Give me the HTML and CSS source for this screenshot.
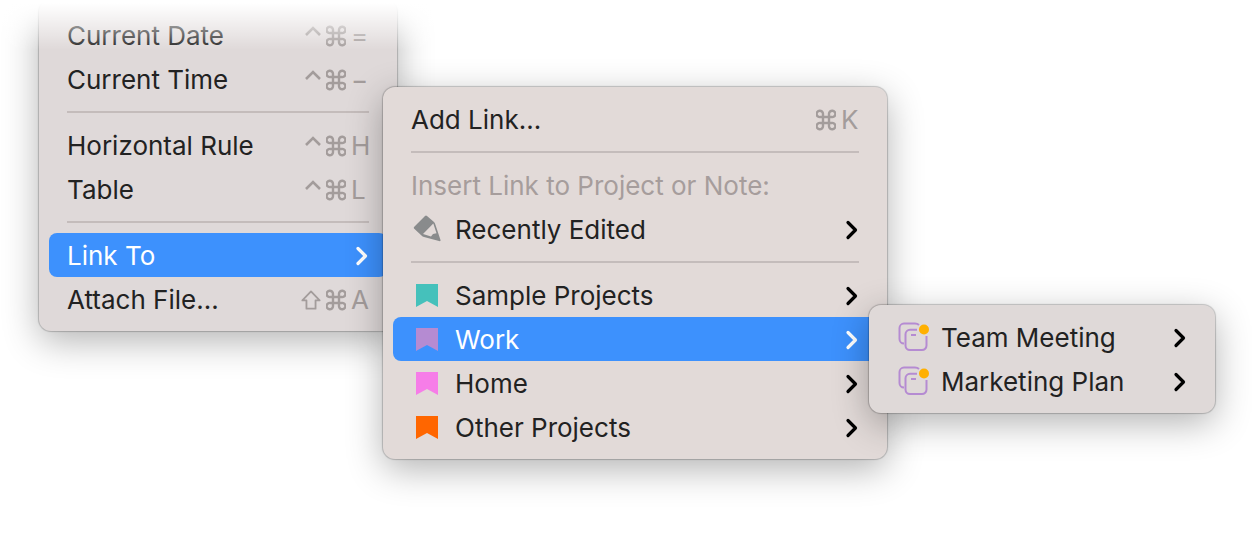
FILE: index.html
```html
<!DOCTYPE html>
<html lang="en">
<head>
    <meta charset="UTF-8">
    <meta name="viewport" content="width=device-width, initial-scale=1.0">
    <title>Insert Menu</title>
    <link rel="stylesheet" href="styles.css">
</head>
<body>
    <!-- Shared icons -->
    <svg class="icon-defs" aria-hidden="true">
        <symbol id="control" viewBox="0 0 16 22">
            <path d="M1 10 L8 3 L15 10" fill="none" stroke="currentColor" stroke-width="2.6"/>
        </symbol>
        <symbol id="command" viewBox="0 0 20 22">
            <path d="M7 8 H4.5 A3.2 3.2 0 1 1 7 4.8 V17.2 A3.2 3.2 0 1 1 4.5 14 H15.5 A3.2 3.2 0 1 1 13 17.2 V4.8 A3.2 3.2 0 1 1 15.5 8 Z" fill="none" stroke="currentColor" stroke-width="2.4"/>
        </symbol>
        <symbol id="shift" viewBox="0 0 22 22">
            <path d="M11 1.6 L20.500 11.500 H16 V20.500 H6 V11.500 H1.500 Z" fill="none" stroke="currentColor" stroke-width="2" stroke-linejoin="round"/>
        </symbol>
        <symbol id="chevron" viewBox="0 0 14 20">
            <path d="M3 2.5 L10.500 10 L3 17.5" fill="none" stroke="currentColor" stroke-width="3.2" stroke-linecap="round" stroke-linejoin="round"/>
        </symbol>
        <symbol id="pencil" viewBox="0 0 32 32">
            <path d="M3 14 L14 3 Q15 2 16 3 L23 9 Q24 10 24.500 12 L29.500 27 Q30 28.500 28 28 L13 24 Q11.500 23.500 10.500 22.500 L3 15.500 Q2.500 14.800 3 14 Z M22.300 10.500 L12 21 L20 23.500 L22 21 L25.500 20.300 Z" fill="currentColor" fill-rule="evenodd"/>
        </symbol>
        <symbol id="bookmark" viewBox="0 0 32 32">
            <path d="M5 5 H27 V28 L16 22 L5 28 Z" fill="currentColor"/>
        </symbol>
        <symbol id="notes" viewBox="0 0 32 32">
            <path d="M22 4 Q20.500 2.600 18 2.600 H7 A4.500 4.500 0 0 0 2.500 7 V18 A4.500 4.500 0 0 0 7 22.500" fill="none" stroke="currentColor" stroke-width="2"/>
            <path d="M20 8.800 H13 A4.500 4.500 0 0 0 8.500 13.300 V24.500 A4.500 4.500 0 0 0 13 29 H25 A4.500 4.500 0 0 0 29.500 24.500 V15" fill="none" stroke="currentColor" stroke-width="2"/>
            <path d="M14 14 H19" stroke="currentColor" stroke-width="2"/>
            <circle cx="27" cy="8.500" r="5" fill="#ffb000"/>
        </symbol>
    </svg>

    <nav class="menu-area" aria-label="Insert">
        <ul class="menu menu-insert">
            <li>
                <button class="item">Current Date
                    <span class="shortcut"><svg class="key-small"><use href="#control"/></svg><svg class="key"><use href="#command"/></svg><kbd>=</kbd></span>
                </button>
            </li>
            <li>
                <button class="item">Current Time
                    <span class="shortcut"><svg class="key-small"><use href="#control"/></svg><svg class="key"><use href="#command"/></svg><kbd>−</kbd></span>
                </button>
            </li>
            <li class="separator" role="separator"></li>
            <li>
                <button class="item">Horizontal Rule
                    <span class="shortcut"><svg class="key-small"><use href="#control"/></svg><svg class="key"><use href="#command"/></svg><kbd>H</kbd></span>
                </button>
            </li>
            <li>
                <button class="item">Table
                    <span class="shortcut"><svg class="key-small"><use href="#control"/></svg><svg class="key"><use href="#command"/></svg><kbd>L</kbd></span>
                </button>
            </li>
            <li class="separator" role="separator"></li>
            <li class="has-submenu">
                <button class="item active" aria-expanded="true">Link To
                    <svg class="chevron"><use href="#chevron"/></svg>
                </button>

                <ul class="menu submenu menu-link">
                    <li>
                        <button class="item">Add Link...
                            <span class="shortcut"><svg class="key"><use href="#command"/></svg><kbd>K</kbd></span>
                        </button>
                    </li>
                    <li class="separator" role="separator"></li>
                    <li class="item heading">Insert Link to Project or Note:</li>
                    <li>
                        <button class="item">
                            <svg class="icon gray"><use href="#pencil"/></svg>Recently Edited
                            <svg class="chevron"><use href="#chevron"/></svg>
                        </button>
                    </li>
                    <li class="separator" role="separator"></li>
                    <li>
                        <button class="item">
                            <svg class="icon teal"><use href="#bookmark"/></svg>Sample Projects
                            <svg class="chevron"><use href="#chevron"/></svg>
                        </button>
                    </li>
                    <li class="has-submenu">
                        <button class="item active" aria-expanded="true">
                            <svg class="icon purple"><use href="#bookmark"/></svg>Work
                            <svg class="chevron"><use href="#chevron"/></svg>
                        </button>

                        <ul class="menu submenu menu-work">
                            <li>
                                <button class="item">
                                    <svg class="icon purple"><use href="#notes"/></svg>Team Meeting
                                    <svg class="chevron"><use href="#chevron"/></svg>
                                </button>
                            </li>
                            <li>
                                <button class="item">
                                    <svg class="icon purple"><use href="#notes"/></svg>Marketing Plan
                                    <svg class="chevron"><use href="#chevron"/></svg>
                                </button>
                            </li>
                        </ul>
                    </li>
                    <li>
                        <button class="item">
                            <svg class="icon pink"><use href="#bookmark"/></svg>Home
                            <svg class="chevron"><use href="#chevron"/></svg>
                        </button>
                    </li>
                    <li>
                        <button class="item">
                            <svg class="icon orange"><use href="#bookmark"/></svg>Other Projects
                            <svg class="chevron"><use href="#chevron"/></svg>
                        </button>
                    </li>
                </ul>
            </li>
            <li>
                <button class="item">Attach File...
                    <span class="shortcut"><svg class="key"><use href="#shift"/></svg><svg class="key"><use href="#command"/></svg><kbd>A</kbd></span>
                </button>
            </li>
        </ul>
    </nav>
</body>
</html>
```
FILE: styles.css
```css
* {
    box-sizing: border-box;
}
body {
    margin: 0;
    background-color: #fff;
    color: #222;
    font-family: Inter, "Liberation Sans", sans-serif;
    font-size: 26px;
    line-height: 32px;
}
.icon-defs {
    display: none;
}
.menu-area {
    position: relative;
    display: flex;
    align-items: flex-start;
    min-height: 100vh;
    padding-left: 39px;
    overflow: hidden;
}
/* The top of the first menu fades out */
.menu-area::after {
    content: "";
    position: absolute;
    top: 0;
    left: 0;
    right: 0;
    height: 50px;
    background: linear-gradient(#fff 6%, rgba(255, 255, 255, 0));
}

/* Menus */
.menu {
    list-style: none;
    margin: 0;
    padding: 10px;
    border-radius: 12px;
    background-color: #e2dad8;
    box-shadow: 0 0 1px 1px rgba(0, 0, 0, 0.2), 0 10px 36px rgba(0, 0, 0, 0.3);
}
.menu-insert {
    min-width: 358px;
    padding-top: 13px;
    background-color: #dfd9d9;
}
.has-submenu {
    position: relative;
}
.submenu {
    position: absolute;
}
.menu-link {
    top: -146px;
    left: calc(100% - 4px);
    min-width: 504px;
}
.menu-work {
    top: -12px;
    left: calc(100% - 8px);
    min-width: 346px;
    background-color: #dfd9d8;
}

/* Menu items */
.item {
    display: flex;
    align-items: center;
    width: 100%;
    height: 44px;
    padding: 2px 18px 0;
    border: none;
    border-radius: 8px;
    background: none;
    color: #222;
    font: inherit;
    text-align: left;
    white-space: nowrap;
}
.item.active {
    background-color: #3d91fd;
    color: #fff;
}
.item.heading {
    color: #a69d9c;
}
.separator {
    height: 22px;
    padding: 10px 18px;
}
.separator::before {
    content: "";
    display: block;
    height: 2px;
    background-color: #c4bcbb;
}

/* Shortcuts and icons */
.shortcut {
    display: flex;
    align-items: center;
    gap: 5px;
    margin-left: auto;
    color: #a39c9b;
}
.shortcut kbd {
    width: 18px;
    font: inherit;
}
.key {
    width: 20px;
    height: 22px;
}
.key-small {
    width: 16px;
    height: 22px;
}
.chevron {
    width: 14px;
    height: 20px;
    margin-left: auto;
    color: #000;
}
.active .chevron {
    color: #fff;
}
.menu-work .chevron {
    color: #000;
}
.icon {
    width: 32px;
    height: 32px;
    margin-right: 12px;
    margin-bottom: 2px;
}
.gray {
    color: #898b8c;
}
.teal {
    color: #45c1bb;
}
.purple {
    color: #b58bd2;
}
.pink {
    color: #f67de8;
}
.orange {
    color: #ff6600;
}
```
